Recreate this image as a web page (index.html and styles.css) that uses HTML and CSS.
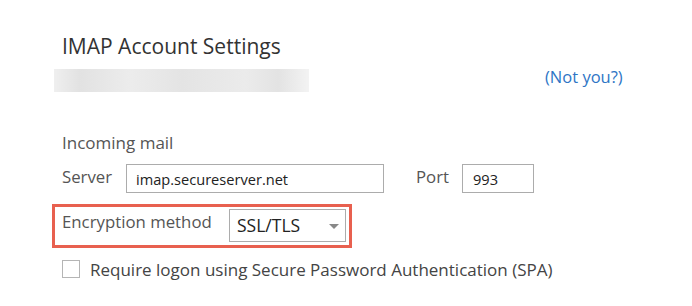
FILE: index.html
```html
<!doctype html>
<html>
<head>
    <meta charset="utf-8" />
    <title>IMAP Account Settings</title>
    <link rel="stylesheet" href="styles.css">
</head>
<body>
<div class="dialog">
    <svg class="dialog__close" width="16" height="4" viewBox="0 0 16 4">
        <path d="M2 -6 L8 0 M14 -6 L8 0" stroke="#bbb" stroke-width="1" fill="none"/>
    </svg>
    <h1 class="dialog__title">IMAP Account Settings</h1>
    <div class="account">
        <div class="account__blur"></div>
        <a class="account__link" href="#">(Not you?)</a>
    </div>

    <div class="section__label">Incoming mail</div>
    <div class="row">
        <span class="row__label row__label--server">Server</span>
        <div class="field field--server">imap.secureserver.net</div>
        <span class="row__label row__label--port">Port</span>
        <div class="field field--port">993</div>
    </div>
    <div class="highlight">
        <span class="row__label row__label--enc">Encryption method</span>
        <div class="select">
            <span>SSL/TLS</span>
            <span class="select__arrow"></span>
        </div>
    </div>
    <label class="check">
        <span class="check__box"></span>
        <span>Require logon using Secure Password Authentication (SPA)</span>
    </label>
</div>
</body>
</html>
```

FILE: styles.css
```css
body {
    margin: 0;
    background: #fff;
    font-family: "Open Sans", "Noto Sans", sans-serif;
    color: #444;
}
.dialog {
    position: relative;
    width: 692px;
    height: 306px;
    padding: 32px 0 0 62px;
    box-sizing: border-box;
}
.dialog__close {
    position: absolute;
    top: 0;
    left: 657px;
}
.dialog__title {
    margin: 0;
    font-size: 21px;
    font-weight: normal;
    color: #333;
    line-height: 28px;
}
.account {
    display: flex;
    align-items: flex-start;
    margin: 9px 0 0 -8px;
    height: 23px;
}
.account__blur {
    width: 255px;
    height: 23px;
    background: linear-gradient(90deg, #efefef, #e2e2e2 10%, #ececec 30%, #e4e4e4 50%, #ebebeb 75%, #e3e3e3 88%, #f3f3f3);
    filter: blur(0.5px);
}
.account__link {
    margin: -4px 0 0 236px;
    color: #2e75c5;
    text-decoration: none;
    font-size: 16.5px;
    line-height: 23px;
}
.section__label {
    margin-top: 41px;
    font-size: 17px;
    color: #555;
    line-height: 20px;
}
.row {
    display: flex;
    align-items: flex-start;
    margin-top: 11px;
}
.row__label {
    font-size: 16.8px;
    color: #555;
    line-height: 20px;
    margin-top: 3px;
}
.row__label--server {
    width: 64px;
}
.row__label--port {
    width: 46px;
    margin-left: 32px;
}
.field {
    box-sizing: border-box;
    height: 29px;
    border: 1px solid #acacac;
    font-size: 14.6px;
    line-height: 28px;
    color: #222;
    padding: 0 0 0 9px;
}
.field--server {
    width: 258px;
}
.field--port {
    width: 72px;
    padding-left: 10px;
}
.highlight {
    display: flex;
    align-items: flex-start;
    margin: 11px 0 0 -10px;
    width: 300px;
    height: 44px;
    box-sizing: border-box;
    border: 3px solid #e8604f;
    padding: 0 3px 0 7px;
}
.row__label--enc {
    flex: 1;
    margin-top: 4.5px;
}
.select {
    box-sizing: border-box;
    margin-top: 2px;
    width: 117px;
    height: 33px;
    border: 1px solid #acacac;
    display: flex;
    align-items: flex-start;
    justify-content: space-between;
    padding: 0 6px 0 7px;
    font-size: 17.5px;
    line-height: 31px;
    color: #222;
}
.select__arrow {
    width: 0;
    height: 0;
    border-left: 5px solid transparent;
    border-right: 5px solid transparent;
    border-top: 5px solid #888;
    margin-top: 14px;
}
.check {
    display: flex;
    align-items: flex-start;
    margin-top: 12px;
    font-size: 17px;
    line-height: 20px;
    color: #444;
}
.check__box {
    width: 18px;
    height: 18px;
    box-sizing: border-box;
    border: 1px solid #b5b5b5;
    margin-right: 10px;
}
```
